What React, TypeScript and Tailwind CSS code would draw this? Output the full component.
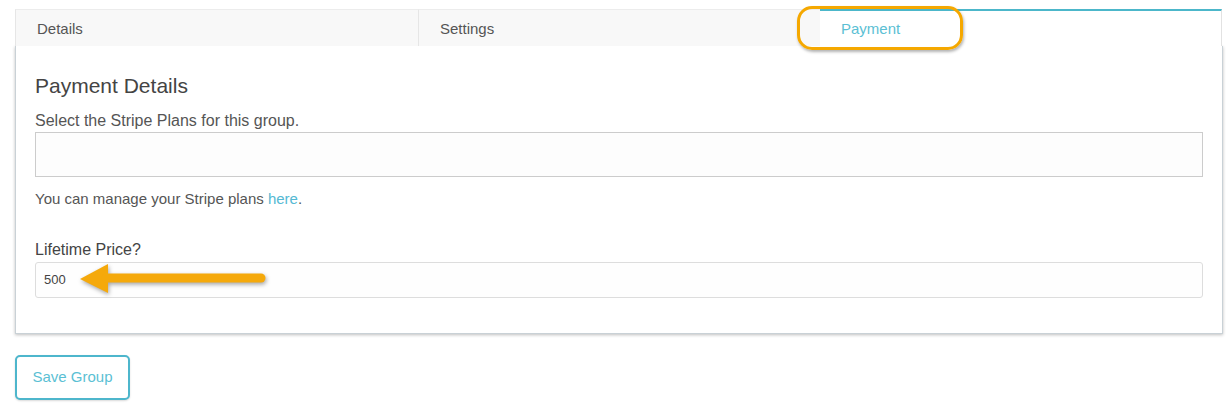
import React from "react";

const tabs = ["Details", "Settings", "Payment"];

function Arrow() {
  // orange call-out arrow pointing at the price value
  return (
    <svg
      className="absolute left-[45px] top-0 drop-shadow-[1px_2px_2px_rgba(0,0,0,0.35)]"
      width="195"
      height="36"
      viewBox="0 0 195 36"
    >
      <path d="M0 17 L28 2 L28 31 Z" fill="#f5a90b" />
      <line x1="26" y1="16" x2="181" y2="16" stroke="#f5a90b" strokeWidth="9" strokeLinecap="round" />
    </svg>
  );
}

export default function App() {
  return (
    <div className="w-[1231px] h-[408px] bg-white pt-[9px] pl-[15px] text-[#555]" style={{ fontFamily: '"Liberation Sans", Arial, sans-serif' }}>
      <div className="w-[1207px]">
        {/* Tabs */}
        <div className="grid grid-cols-[403px_402px_402px] h-[37px]">
          {tabs.map((tab) => {
            const active = tab === "Payment";
            return (
              <div
                key={tab}
                className={
                  active
                    ? "relative bg-white border-t-2 border-[#4cb7ca] border-r border-r-[#e2e2e2] pl-[21px] pt-[2px] flex items-center text-[15px] text-[#5bbfd4]"
                    : "bg-[#f8f8f8] border-t border-[#ececec] border-l border-l-[#e6e6e6] pl-[21px] pt-[3px] flex items-center text-[15px] text-[#555]"
                }
              >
                {tab}
                {active && (
                  <div className="absolute left-[-23px] top-[-5px] w-[166px] h-[44px] rounded-[15px] border-[3px] border-[#f5a800] shadow-[1px_2px_3px_rgba(0,0,0,0.3)]" />
                )}
              </div>
            );
          })}
        </div>

        {/* Card */}
        <div className="bg-white border border-t-0 border-[#c9d1d6] shadow-[0_1px_3px_rgba(0,0,0,0.25)] px-[19px] pt-[26px] pb-[35px] w-[1208px]">
          <h2 className="text-[21px] leading-[28px] text-[#444]">Payment Details</h2>
          <label className="block text-[16px] leading-[21px] mt-[10px] text-[#555]">Select the Stripe Plans for this group.</label>
          <div className="h-[45px] border border-[#cccccc] bg-[#fdfdfd] mt-[1px]" />
          <p className="text-[15px] leading-[21px] mt-[11px] text-[#555]">
            You can manage your Stripe plans <span className="text-[#55b9d3]">here</span>.
          </p>
          <label className="block text-[16px] leading-[21px] mt-[30px] text-[#444]">Lifetime Price?</label>
          <div className="relative mt-[2px]">
            <div className="h-[36px] border border-[#dddddd] rounded-[3px] bg-[#fefefe] flex items-center pl-[8px] text-[13px] text-[#444]">
              500
            </div>
            <Arrow />
          </div>
        </div>

        {/* Save */}
        <button className="mt-[21px] w-[115px] h-[45px] border-2 border-[#4db6cc] rounded-[5px] text-[15px] text-[#5bbfd4] bg-white shadow-[0_1px_2px_rgba(0,0,0,0.15)]">
          Save Group
        </button>
      </div>
    </div>
  );
}
